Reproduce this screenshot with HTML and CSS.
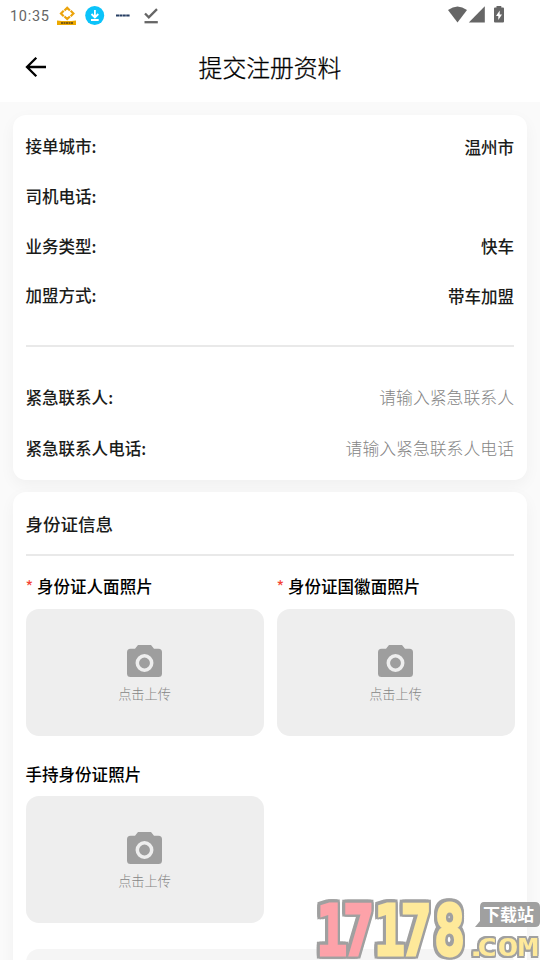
FILE: index.html
```
<!DOCTYPE html>
<html lang="zh-CN">
<head>
<meta charset="utf-8">
<title>提交注册资料</title>
<link rel="stylesheet" href="styles.css">
</head>
<body>
<svg class="defs" width="0" height="0">
  <symbol id="camera" viewBox="0 0 35 32"><path fill="#9e9e9e" d="M11 0h13l3 3.700h4.500q3.500 0 3.500 3.500v21.300q0 3.500-3.500 3.500h-28q-3.500 0-3.500-3.500v-21.300q0-3.500 3.500-3.500h4.500z"/><circle cx="17.500" cy="18" r="7.200" fill="#9e9e9e" stroke="#eee" stroke-width="3.500"/></symbol>
</svg>
<div class="screen">
  <div class="status">
    <span class="time">10:35</span>
    <svg class="status-left" width="104" height="22" viewBox="56 5 104 22">
      <path d="M64.500 10.500 67.200 7.800l2.700 2.700M70.700 10.800l2.700 2.700-2.700 2.700M69.900 16.500l-2.700 2.500-2.700-2.500M63.700 16.200l-2.700-2.700 2.700-2.700" fill="none" stroke="#eba30b" stroke-width="2.200"/>
      <path d="M57 20.500q9.500 1 19 0V25H57z" fill="#eda900"/><path d="M61 23h12" stroke="#5c4310" stroke-width="1.600" stroke-dasharray="2 .5"/>
      <circle cx="94.700" cy="15.500" r="9.500" fill="#0bc3fa"/>
      <path d="M94.900 10v7M91.500 14l3.400 3.500 3.400-3.500M91 20h7.700" fill="none" stroke="#fff" stroke-width="1.800"/>
      <path d="M116 15.500h14" stroke="#263e63" stroke-width="1.800" stroke-dasharray="3 .4"/>
      <path d="m145 13.500 3.800 3.800 8.200-8.200" fill="none" stroke="#666" stroke-width="2.300"/><path d="M144.500 22.200h13.300" stroke="#666" stroke-width="2.300"/>
    </svg>
    <svg class="status-right" width="60" height="20" viewBox="446 5 60 20" fill="#666">
      <path d="M448 10q9.500-7 19 0l-9.500 12.500z"/><path d="M484.800 6.300v16.200h-16z"/>
      <path d="M496.500 6h4.800v1.500h1.700q1 0 1 1v13q0 1-1 1h-8q-1 0-1-1v-13q0-1 1-1h1.500z"/><path d="M499.700 10.500 496 16h2.300v4l3.700-5.500h-2.300z" fill="#fff"/>
    </svg>
  </div>
  <header class="header">
    <svg class="back" width="22" height="22" viewBox="0 0 22 22"><path d="M21 11H2.500M11.300 1.700 2 11l9.300 9.300" fill="none" stroke="#000" stroke-width="2.300"/></svg>
    <h1>提交注册资料</h1>
  </header>
  <main>
    <section class="card info">
      <div class="row"><span>接单城市:</span><span class="value">温州市</span></div>
      <div class="row"><span>司机电话:</span></div>
      <div class="row"><span class="low">业务类型:</span><span class="low">快车</span></div>
      <div class="row"><span>加盟方式:</span><span class="value">带车加盟</span></div>
      <div class="line"></div>
      <div class="row contact"><span>紧急联系人:</span><span class="hint">请输入紧急联系人</span></div>
      <div class="row contact"><span>紧急联系人电话:</span><span class="hint">请输入紧急联系人电话</span></div>
    </section>
    <section class="card identity">
      <h2>身份证信息</h2>
      <div class="photos">
        <div class="photo"><div class="label"><span class="required">*</span>身份证人面照片</div><div class="upload"><svg width="35" height="32"><use href="#camera"/></svg><span>点击上传</span></div></div>
        <div class="photo"><div class="label"><span class="required">*</span>身份证国徽面照片</div><div class="upload"><svg width="35" height="32"><use href="#camera"/></svg><span>点击上传</span></div></div>
        <div class="photo"><div class="label optional">手持身份证照片</div><div class="upload"><svg width="35" height="32"><use href="#camera"/></svg><span>点击上传</span></div></div>
      </div>
      <div class="next-panel"></div>
    </section>
  </main>
  <svg class="watermark" width="230" height="70" viewBox="310 890 230 70">
    <g class="outlined">
      <text class="digits" transform="translate(317 955) scale(.74 1)" x="-1 35 77 113 158" y="0"><tspan class="red">17</tspan>178</text>
    </g>
    <path d="M484 902h51q5 0 5 5v15q0 5-5 5h-60l5-6v-14q0-5 4-5z" fill="#a0a0a0"/>
    <text class="station" x="483" y="920.500">下载站</text>
    <g class="outlined small">
      <text class="com" transform="translate(470 956) scale(1.450 1)" x="-3 4.500 19 33" y="0">.COM</text>
    </g>
  </svg>
</div>
</body>
</html>
```
FILE: styles.css
```
* { box-sizing: border-box; }
body { margin: 0; background: #fafafa; color: #1b1c1a; font-family: Roboto, "Noto Sans CJK SC", sans-serif; }
.defs { display: block; height: 0; }
.screen { position: relative; height: 960px; overflow: hidden; }
.status { height: 32px; background: #fff; display: flex; align-items: flex-start; padding: 5px 34px 0 10px; }
.time { width: 46px; font-size: 14.500px; line-height: 23px; letter-spacing: .7px; color: #666; }
.status-right { margin-left: auto; }
.header { height: 70px; background: #fff; display: grid; grid-template-columns: 60px 1fr 60px; align-items: center; }
.back { margin-left: 25px; }
h1 { margin: 0; text-align: center; font: 300 23.800px/36px "Noto Sans CJK SC", sans-serif; color: #000; -webkit-text-stroke: .3px #000; }
main { padding: 13px 13px 0; display: flex; flex-direction: column; gap: 12px; }
.card { background: #fff; border-radius: 13px; padding: 0 13px 0 12.500px; box-shadow: 0 5px 16px rgba(0,0,0,.045); }
.info { height: 365px; padding-top: 6px; }
.row { height: 49.800px; display: flex; align-items: center; justify-content: space-between; font: 500 16.550px/24px "Noto Sans CJK SC", sans-serif; }
.value { padding-top: 2px; }
.low { padding-top: 1px; }
.line { height: 2px; background: #e9e9e9; margin: 25px 0 24px; }
.contact { height: 51px; }
.hint { font-weight: 300; font-size: 16.850px; color: #858585; }
.identity { height: 520px; }
h2 { margin: 0; height: 63.500px; border-bottom: 2px solid #e9e9e9; font: 500 17.500px/64px "Noto Sans CJK SC", sans-serif; }
.photos { display: grid; grid-template-columns: 238px 238px; column-gap: 13px; row-gap: 25px; padding-top: 18px; }
.label { display: flex; height: 27px; margin-bottom: 8px; font: 500 16.550px/25px "Noto Sans CJK SC", sans-serif; color: #000; white-space: nowrap; }
.label.optional { line-height: 27px; }
.required { width: 11.500px; color: #f44336; font-weight: 400; }
.upload { height: 127px; border-radius: 13px; background: #eee; display: flex; flex-direction: column; align-items: center; padding-top: 36.500px; }
.upload svg { display: block; }
.upload span { font: 300 13.200px/20px "Noto Sans CJK SC", sans-serif; margin-top: 6.500px; color: #858585; }
.next-panel { height: 60px; margin-top: 26px; border-radius: 13px; background: #f5f5f5; }
.watermark { position: absolute; right: 0; bottom: 0; }
.outlined { filter: drop-shadow(2.500px 0 0 #a0a0a0) drop-shadow(-2.500px 0 0 #a0a0a0) drop-shadow(0 2.500px 0 #a0a0a0) drop-shadow(0 -2.500px 0 #a0a0a0); }
.small { filter: drop-shadow(1.500px 0 0 #a0a0a0) drop-shadow(-1.500px 0 0 #a0a0a0) drop-shadow(0 2px 0 #a0a0a0) drop-shadow(0 -2px 0 #a0a0a0); }
.digits { font: 700 70px "DejaVu Sans Mono", monospace; fill: #fee99a; stroke: #fee99a; stroke-width: 3px; }
.red { fill: #fda2a9; stroke: #fda2a9; }
.station { font: 700 17px "Noto Sans CJK SC", sans-serif; fill: #fff; }
.com { font: 700 24px "DejaVu Sans Mono", monospace; fill: #fee99a; }
```
